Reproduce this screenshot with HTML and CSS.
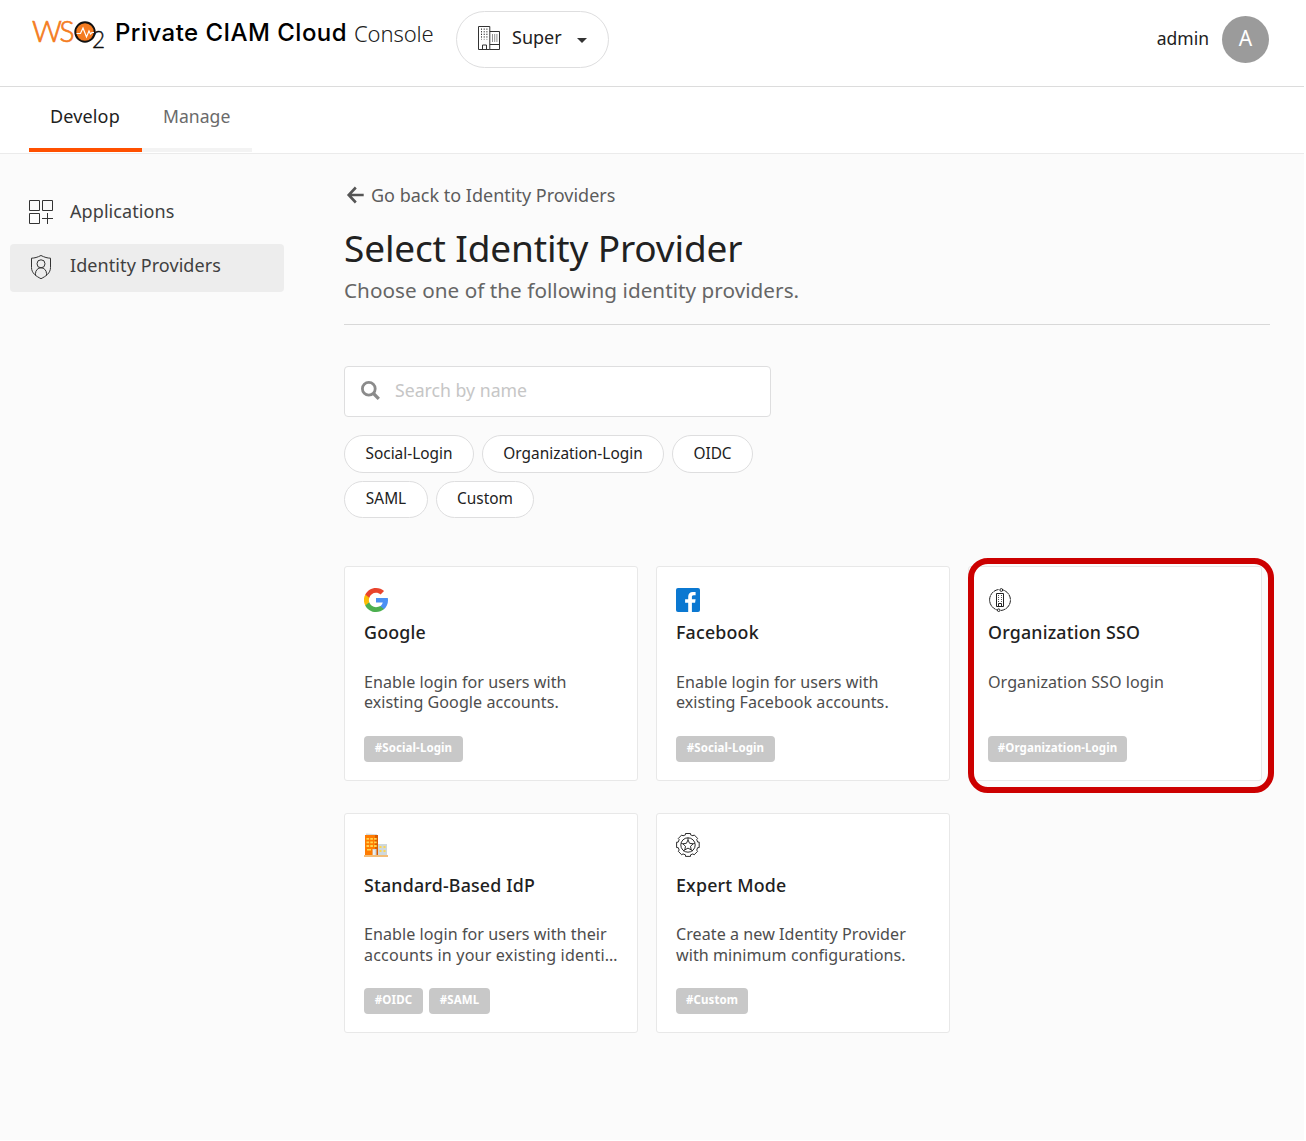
FILE: index.html
```html
<!DOCTYPE html>
<html lang="en">
<head>
<meta charset="utf-8">
<title>Private CIAM Cloud Console</title>
<link rel="stylesheet" href="styles.css">
</head>
<body>
<div class="page">
  <header class="header">
    <div class="brand">
      <svg class="logo" width="80" height="52" viewBox="-2 -8 80 52">
        <g class="logo-letters">
          <text x="0" y="24" textLength="30" lengthAdjust="spacingAndGlyphs">W</text>
          <text x="27.500" y="24" textLength="15" lengthAdjust="spacingAndGlyphs">S</text>
        </g>
        <circle cx="53" cy="14" r="9.700" fill="#f47b20" stroke="#111" stroke-width="2"/>
        <path d="M44.500 15.500h4l2.500-5.500 3.500 9 2.500-6 1.500 3 1.500-1.500h2" fill="none" stroke="#fff" stroke-width="1.200"/>
        <text class="logo-two" x="60" y="30" textLength="13" lengthAdjust="spacingAndGlyphs">2</text>
      </svg>
      <span class="product">Private CIAM Cloud</span>
      <span class="console">Console</span>
    </div>
    <button class="org" type="button">
      <svg width="22" height="24" viewBox="0 0 22 24" fill="none" stroke="#333">
        <path d="M.5.5h11.300v23H.5zM11.800 5.500h9.700v18h-9.700M11.800 18.500h9.700M4.500 23.500v-4.500h4v4.500"/>
        <path d="M3.500 2.500v11M6.200 2.500v11M8.900 2.500v11" stroke-dasharray="1.300 1.300"/>
        <path d="M14.500 8v8M16.700 8v8M18.900 8v8" stroke="#777" stroke-width=".8"/>
      </svg>
      <span>Super</span>
      <i class="caret"></i>
    </button>
    <div class="user"><span class="user-name">admin</span><span class="avatar">A</span></div>
  </header>

  <nav class="tabs">
    <a class="tab tab-active">Develop</a>
    <a class="tab tab-manage">Manage</a>
  </nav>

  <div class="body">
    <aside class="side">
      <a class="side-item">
        <svg width="26" height="26" viewBox="0 0 26 26" fill="none" stroke="#333">
          <path d="M1.500 1.500h10v10h-10zM14.500 1.500h10v10h-10zM1.500 14.500h10v10h-10zM19.500 14v11M14 19.500h11"/>
        </svg>
        <span>Applications</span>
      </a>
      <a class="side-item side-active">
        <svg width="26" height="26" viewBox="0 0 26 26" fill="none" stroke="#333">
          <path d="M13 1.500c3.500 1.800 6.500 2.600 9.500 2.700v9.300c0 5.500-4.500 8.700-9.500 11.200-5-2.500-9.500-5.700-9.500-11.200V4.200c3-.1 6-.9 9.500-2.700z"/>
          <circle cx="13" cy="9.800" r="4"/>
          <path d="M7.500 21.500v-2a5.500 5.700 0 0 1 11 0v2"/>
        </svg>
        <span>Identity Providers</span>
      </a>
    </aside>

    <main class="main">
      <a class="back">
        <svg width="18" height="18" viewBox="0 0 18 18" fill="none" stroke="#555" stroke-width="2.600"><path d="M9.800 1.500L2.700 9l7.100 7.500M2.700 9h15"/></svg>
        <span>Go back to Identity Providers</span>
      </a>
      <h1>Select Identity Provider</h1>
      <p class="subtitle">Choose one of the following identity providers.</p>

      <div class="search">
        <svg width="19" height="19" viewBox="0 0 19 19" fill="none" stroke="#8b8b8b"><circle cx="7.800" cy="7.800" r="6.400" stroke-width="2.800"/><path d="M12.500 12.500l5.300 5.300" stroke-width="3.200"/></svg>
        <span>Search by name</span>
      </div>

      <div class="filters">
        <span class="chip w-social">Social-Login</span>
        <span class="chip w-org">Organization-Login</span>
        <span class="chip w-oidc">OIDC</span>
        <span class="chip w-saml">SAML</span>
        <span class="chip w-custom">Custom</span>
      </div>

      <div class="cards">
        <article class="card">
          <svg width="24" height="24" viewBox="0 0 48 48">
            <path fill="#4a90f4" d="M48 24.500c0-1.600-.1-3.200-.4-4.700H24v9.400h13.500c-.6 3-2.300 5.500-5.300 7.200v6h7.800C45 38.200 48 31.900 48 24.500z"/>
            <path fill="#4caf50" d="M24 48c6.500 0 11.900-2.100 16-5.800l-7.800-6c-2.200 1.400-4.900 2.300-8.200 2.300-6.300 0-11.600-4.200-13.500-9.900h-8v6.200C6.500 42.800 14.600 48 24 48z"/>
            <path fill="#fbbc05" d="M10.500 28.600a14.400 14.400 0 0 1 0-9.200v-6.200h-8a24 24 0 0 0 0 21.600z"/>
            <path fill="#e9442d" d="M24 9.500c3.500 0 6.700 1.200 9.200 3.600l6.900-6.900C35.900 2.400 30.500 0 24 0 14.600 0 6.500 5.400 2.500 13.200l8 6.200C12.400 13.700 17.700 9.500 24 9.500z"/>
          </svg>
          <h2>Google</h2>
          <p>Enable login for users with<br>existing Google accounts.</p>
          <div class="tags"><span class="tag w-tsocial">#Social-Login</span></div>
        </article>
        <article class="card">
          <svg width="24" height="24" viewBox="0 0 24 24">
            <rect width="24" height="24" rx="2" fill="#0b78d1"/>
            <path fill="#fff" d="M12.200 24v-9.200H9.100v-3.500h3.100V8.600c0-3 1.800-4.700 4.600-4.700 1.300 0 2.500.1 2.800.2v3.200h-1.900c-1.500 0-1.800.8-1.800 1.800v2.200h3.700l-.5 3.500h-3.200V24z"/>
          </svg>
          <h2>Facebook</h2>
          <p>Enable login for users with<br>existing Facebook accounts.</p>
          <div class="tags"><span class="tag w-tsocial">#Social-Login</span></div>
        </article>
        <article class="card highlighted">
          <svg width="24" height="24" viewBox="0 0 24 24" fill="none" stroke="#222">
            <path d="M10.500 1.500A10.500 10.500 0 0 0 9.300 22M12.800 22.500A10.500 10.500 0 0 0 14.300 1.800" stroke-width="1" stroke-dasharray="5 .4"/>
            <circle cx="13.300" cy="2" r="1.400" stroke-width="1"/><circle cx="10.700" cy="22.200" r="1.300" stroke-width="1"/>
            <path d="M8.500 5.500h7v13h-7z" stroke-width="1"/><path d="M10.500 18.500v-3h3v3" stroke-width="1"/>
            <path d="M10.500 7v7M13.500 7v7" stroke-width="1" stroke="#555" stroke-dasharray="1 1"/>
          </svg>
          <h2>Organization SSO</h2>
          <p>Organization SSO login</p>
          <div class="tags"><span class="tag w-torg">#Organization-Login</span></div>
        </article>
        <article class="card tall">
          <svg width="24" height="24" viewBox="0 0 24 24">
            <path fill="#d5dadb" d="M2 .5l11 .8V3H2z"/>
            <path fill="#ff7b00" d="M1 2h10v20H1z"/><path fill="#d95b00" d="M11 2h3v20h-3z"/>
            <path fill="#cfd8dc" d="M14 11h9v11h-9zM8.500 16h4v6h-4z"/><path fill="#eceff1" d="M9 17h1.800v5H9z"/>
            <path stroke="#ffd54f" stroke-width="1.800" stroke-dasharray="2.600 1.200" d="M2.500 5.800H13M2.500 9.400H13M2.500 13H13"/>
            <path fill="#ffd54f" d="M3 16h4v1.500H3zM15.500 13h2v2h-2zM19.500 13h2v2h-2zM15.500 17h2v2h-2zM19.500 17h2v2h-2z"/>
            <path fill="#f3bd78" d="M0 22h24v2H0z"/>
          </svg>
          <h2>Standard-Based IdP</h2>
          <p>Enable login for users with their<br><span class="ellipsized">accounts in your existing identi…</span></p>
          <div class="tags"><span class="tag w-toidc">#OIDC</span><span class="tag w-tsaml">#SAML</span></div>
        </article>
        <article class="card tall">
          <svg width="24" height="24" viewBox="0 0 24 24" fill="none" stroke="#222" stroke-width=".95">
            <path d="M9.500.5h5v1.300l2.500 1 1.200-.9 3.400 3.500-.9 1.200 1 2.500h1.500v5.500h-1.500l-1 2.500.9 1.300-3.500 3.400-1.200-.9-2.400 1v1.500h-5v-1.500l-2.500-1-1.300.9-3.400-3.500.9-1.300-1-2.400H.6V9.200h1.500l1.100-2.500-.9-1.200 3.400-3.500 1.300.8 2.500-1z"/>
            <circle cx="12" cy="12" r="7.200"/>
            <path d="M12 7l1.600 3.300 3.600.5-2.700 2.500.7 3.600-3.200-1.800-3.200 1.800.7-3.600-2.700-2.500 3.600-.5zM12 4.800V7M5 10l1.800.8M19 10l-1.800.8M7.500 18l1.300-1.100M16.500 18l-1.300-1.100"/>
          </svg>
          <h2>Expert Mode</h2>
          <p>Create a new Identity Provider<br>with minimum configurations.</p>
          <div class="tags"><span class="tag w-tcustom">#Custom</span></div>
        </article>
      </div>
    </main>
  </div>
</div>
</body>
</html>
```
FILE: styles.css
```css
* { box-sizing: border-box; }
body { margin: 0; background: #fff; color: #212121; font-family: "Noto Sans", sans-serif; font-size: 18px; }
svg { display: block; flex: none; }
h1, h2, p { margin: 0; font-weight: 400; white-space: nowrap; }
.page { width: 1304px; height: 1140px; background: #fbfbfb; }

.header { display: flex; align-items: flex-start; height: 87px; padding: 0 35px 0 32px; background: #fff; border-bottom: 1px solid #dcdcdc; }
.brand { display: flex; align-items: flex-start; width: 424px; padding-top: 18px; white-space: nowrap; }
.logo { margin: -8px -2px 0; }
.logo-letters { font: 300 28.500px Lato, sans-serif; fill: #f47b20; stroke: #f47b20; stroke-width: .7px; }
.logo-two { font: 300 23.500px Lato, sans-serif; fill: #111; stroke: #111; stroke-width: .4px; }
.product { width: 238px; margin-left: 7px; font: 500 24px/30px Inter, sans-serif; letter-spacing: .47px; color: #000; }
.console { margin-left: 1px; font-size: 22px; font-weight: 300; line-height: 31px; letter-spacing: -.1px; }
.org { display: flex; align-items: flex-start; width: 153px; height: 57px; margin-top: 11px; padding: 14px 0 0 21px; border: 1px solid #dededf; border-radius: 29px; background: #fff; color: #212121; font: 18px/24px "Noto Sans", sans-serif; }
.org span { width: 50px; margin-left: 12px; margin-top: -1px; text-align: left; }
.caret { margin: 12px 0 0 15px; border: 5px solid transparent; border-top-color: #333; border-bottom: 0; }
.user { display: flex; margin: 16px 0 0 auto; }
.user-name { line-height: 45px; font-size: 17.500px; }
.avatar { width: 47px; height: 47px; margin-left: 13px; border-radius: 50%; background: #9b9b9b; color: #fff; font-size: 21px; line-height: 45px; text-align: center; }

.tabs { display: flex; height: 67px; padding-left: 29px; background: #fff; border-bottom: 1px solid #ebebeb; }
.tab { width: 113px; height: 65px; padding: 17px 0 0 21px; line-height: 24px; letter-spacing: .15px; border-bottom: 4px solid #ff5000; }
.tab-manage { width: 110px; color: #6a6a6a; font-size: 17.600px; letter-spacing: 0; border-color: #f3f3f3; }

.body { display: flex; }
.side { width: 284px; padding: 34px 0 0 10px; }
.side-item { display: flex; height: 48px; margin-bottom: 8px; padding: 11px 0 0 18px; color: #404040; line-height: 24px; letter-spacing: .08px; }
.side-item span { margin-left: 16px; }
.side-active { padding-top: 10px; border-radius: 4px; background: #ededed; }
.side-active span { margin-top: -1px; }
.main { width: 926px; margin-left: 60px; padding-top: 29px; }
.back { display: flex; align-items: flex-start; height: 24px; padding-left: 2px; color: #5c5c5c; line-height: 24px; }
.back svg { margin: 3px 7px 0 0; }
h1 { margin-top: 16px; font-size: 37px; line-height: 50px; letter-spacing: -.15px; }
.subtitle { height: 49px; margin-top: 3px; border-bottom: 1px solid #d8d8d8; color: #666; font-size: 20.700px; line-height: 28px; letter-spacing: .04px; }
.search { display: flex; height: 51px; width: 427px; margin-top: 41px; padding: 14px 0 0 16px; border: 1px solid #dededf; border-radius: 4px; background: #fff; color: #c6c6c6; font-size: 17.700px; line-height: 20px; }
.search span { margin: -1px 0 0 15px; }
.filters { display: flex; flex-wrap: wrap; gap: 8px; width: 427px; margin-top: 18px; }
.chip { height: 38px; border: 1px solid #dededf; border-radius: 19px; background: #fff; font-size: 15.400px; line-height: 35px; text-align: center; }
.w-social { width: 130px; } .w-org { width: 182px; } .w-oidc { width: 81px; }
.w-saml, .w-custom { height: 37px; line-height: 33px; }
.w-saml { width: 84px; } .w-custom { width: 98px; }

.cards { display: grid; grid-template-columns: repeat(3, 294px); grid-template-rows: 215px 220px; gap: 32px 18px; margin-top: 48px; }
.card { padding: 21px 19px 0; border: 1px solid #e8e8e8; border-radius: 3px; background: #fff; }
h2 { margin-top: 7px; font-size: 17.800px; font-weight: 500; line-height: 26px; letter-spacing: .2px; }
.card p { height: 42px; margin-top: 27px; color: #4d4d4d; font-size: 16.100px; line-height: 20px; letter-spacing: .05px; }
.tags { display: flex; gap: 6px; margin-top: 22px; }
.tag { height: 26px; border-radius: 4px; background: #c8c8c8; color: #fff; font-size: 11.500px; font-weight: 700; line-height: 24px; letter-spacing: .1px; text-align: center; }
.w-tsocial { width: 99px; } .w-torg { width: 139px; } .w-toidc { width: 59px; } .w-tsaml { width: 61px; } .w-tcustom { width: 72px; }
.tall { padding-top: 19px; }
.tall h2 { margin-top: 15px; }
.tall p { margin-top: 26px; line-height: 20.600px; }
.ellipsized { letter-spacing: .18px; }
.highlighted { position: relative; }
.highlighted::after { content: ""; position: absolute; inset: -9.500px -12.500px -13px -1.500px; border: 6px solid #c00; border-radius: 20px; }
```
